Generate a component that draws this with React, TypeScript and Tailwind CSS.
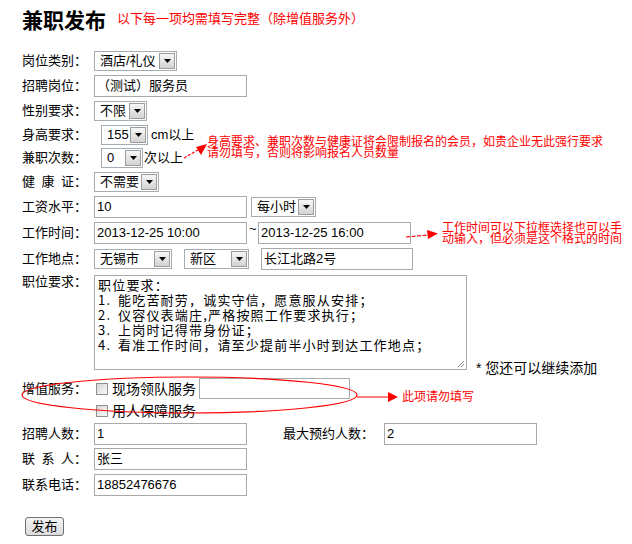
import React from "react";

const Arrow = () => (
  <svg width="7" height="4" viewBox="0 0 7 4">
    <path d="M0 0 L7 0 L3.5 4 Z" fill="#000" />
  </svg>
);

const Sel = ({ w, text }: { w: string; text: string }) => (
  <div className={`flex h-[20px] shrink-0 border border-[#a5acb2] bg-white ${w}`}>
    <span className="flex-1 overflow-hidden whitespace-nowrap pl-[5px] text-[13px] leading-[18px] text-black">{text}</span>
    <span className="my-[1px] mr-[1px] flex w-[16px] items-center justify-center border border-[#9c9c9c] bg-gradient-to-b from-[#f7f7f7] to-[#d2d2d2]">
      <Arrow />
    </span>
  </div>
);

const Inp = ({ w, text, h }: { w: string; text: string; h?: string }) => (
  <div className={`flex shrink-0 items-center border border-[#a9a9a9] bg-white pl-[2px] text-[13px] text-black whitespace-nowrap ${h ?? "h-[22px]"} ${w}`}>
    {text}
  </div>
);

const Label = ({ children }: { children: React.ReactNode }) => (
  <div className="w-[72px] shrink-0 whitespace-nowrap text-[13px] leading-[16px] text-black">{children}</div>
);

const Check = () => (
  <span className="inline-block h-[12px] w-[12px] shrink-0 border border-[#8e8f8f] bg-gradient-to-br from-[#d6d6d6] to-[#fafafa]" />
);

export default function App() {
  return (
    <div className="relative h-[544px] w-[632px] overflow-hidden bg-white pl-[22px] font-['Liberation_Sans','Noto_Sans_CJK_SC',sans-serif] text-black">
      {/* title */}
      <div className="flex h-[38px] items-center">
        <span className="text-[21px] font-bold leading-[24px] font-['Noto_Sans_CJK_SC',sans-serif]">兼职发布</span>
        <span className="ml-[11px] text-[13px] leading-[16px] text-[#ff0000]">以下每一项均需填写完整（除增值服务外）</span>
      </div>

      {/* row 1 */}
      <div className="mt-[11px] flex h-[24px] items-center">
        <Label>岗位类别：</Label>
        <Sel w="w-[83px]" text="酒店/礼仪" />
      </div>
      <div className="flex h-[26px] items-center">
        <Label>招聘岗位：</Label>
        <Inp w="w-[153px]" text="（测试）服务员" />
      </div>
      <div className="flex h-[24px] items-center">
        <Label>性别要求：</Label>
        <Sel w="w-[53px]" text="不限" />
      </div>
      <div className="flex h-[23px] items-center">
        <Label>身高要求：</Label>
        <div className="ml-[7px] flex items-center">
          <Sel w="w-[47px]" text="155" />
          <span className="ml-[3px] text-[13px] leading-[16px]">cm以上</span>
        </div>
      </div>
      <div className="flex h-[23px] items-center">
        <Label>兼职次数：</Label>
        <div className="ml-[7px] flex items-center">
          <Sel w="w-[42px]" text="0" />
          <span className="ml-[1px] text-[13px] leading-[16px]">次以上</span>
        </div>
      </div>
      <div className="flex h-[25px] items-center">
        <Label>健{"\u2002"}康{"\u2002"}证：</Label>
        <Sel w="w-[65px]" text="不需要" />
      </div>
      <div className="flex h-[26px] items-center">
        <Label>工资水平：</Label>
        <Inp w="w-[153px]" text="10" />
        <div className="ml-[4px]">
          <Sel w="w-[65px]" text="每小时" />
        </div>
      </div>
      <div className="flex h-[26px] items-center">
        <Label>工作时间：</Label>
        <Inp w="w-[153px]" text="2013-12-25 10:00" />
        <span className="mb-[8px] w-[11px] pl-[2px] text-[13px] leading-[10px]">~</span>
        <Inp w="w-[153px]" text="2013-12-25 16:00" />
      </div>
      <div className="flex h-[26px] items-center">
        <Label>工作地点：</Label>
        <Sel w="w-[78px]" text="无锡市" />
        <div className="ml-[12px]">
          <Sel w="w-[65px]" text="新区" />
        </div>
        <div className="ml-[12px]">
          <Inp w="w-[152px]" text="长江北路2号" />
        </div>
      </div>

      {/* textarea row */}
      <div className="mt-[3px] flex">
        <div className="w-[72px] shrink-0 text-[13px] leading-[14px]">职位要求：</div>
        <div className="relative h-[95px] w-[373px] shrink-0 border border-[#a9a9a9] bg-white pl-[3px] pt-[1px] text-[13px] leading-[15px] tracking-[1.2px] font-['Noto_Sans_CJK_SC',sans-serif]">
          <div>职位要求：</div>
          <div><span className="inline-block w-[20px]">1.</span>能吃苦耐劳，诚实守信，愿意服从安排；</div>
          <div><span className="inline-block w-[20px]">2.</span>仪容仪表端庄,严格按照工作要求执行；</div>
          <div><span className="inline-block w-[20px]">3.</span>上岗时记得带身份证；</div>
          <div><span className="inline-block w-[20px]">4.</span>看准工作时间，请至少提前半小时到达工作地点；</div>
          <svg className="absolute bottom-[1px] right-[1px]" width="9" height="9" viewBox="0 0 9 9">
            <path d="M8 2 L2 8 M8 5 L5 8" stroke="#8a8a8a" strokeWidth="1" />
          </svg>
        </div>
        <span className="mb-[-6px] ml-[9px] self-end whitespace-nowrap text-[14px] leading-[16px]">* 您还可以继续添加</span>
      </div>

      {/* value-added */}
      <div className="mt-[6px] flex h-[25px] items-center">
        <Label>增值服务：</Label>
        <div className="ml-[2px] flex items-center">
          <Check />
          <span className="ml-[4px] text-[14px] leading-[16px]">现场领队服务</span>
        </div>
        <div className="ml-[3px]">
          <Inp w="w-[151px]" text="" h="h-[21px]" />
        </div>
      </div>
      <div className="flex h-[20px] items-center pl-[74px]">
        <Check />
        <span className="ml-[4px] text-[14px] leading-[16px]">用人保障服务</span>
      </div>

      <div className="flex h-[25px] items-center">
        <Label>招聘人数：</Label>
        <Inp w="w-[153px]" text="1" />
        <span className="ml-[36px] w-[101px] shrink-0 whitespace-nowrap text-[13px] leading-[16px]">最大预约人数：</span>
        <Inp w="w-[153px]" text="2" />
      </div>
      <div className="flex h-[26px] items-center">
        <Label>联{"\u2002"}系{"\u2002"}人：</Label>
        <Inp w="w-[153px]" text="张三" />
      </div>
      <div className="flex h-[26px] items-center">
        <Label>联系电话：</Label>
        <Inp w="w-[153px]" text="18852476676" />
      </div>

      <div className="ml-[3px] mt-[19px] flex h-[19px] w-[39px] items-center justify-center rounded-[3px] border border-[#707070] bg-gradient-to-b from-[#f4f4f4] to-[#dcdcdc] text-[13px] leading-[16px]">
        发布
      </div>

      {/* annotations overlay */}
      <svg className="pointer-events-none absolute left-0 top-0" width="632" height="544" viewBox="0 0 632 544">
        <ellipse cx="189.5" cy="395" rx="167.5" ry="18" fill="none" stroke="#ff0000" strokeWidth="1.2" />
        <path d="M357 397 L390 397" stroke="#ff0000" strokeWidth="1.2" />
        <path d="M388 392 L398 397 L388 402 Z" fill="#ff0000" />
        <path d="M184 158 L198 150" stroke="#ff0000" strokeWidth="1.2" strokeDasharray="3 1.5" />
        <path d="M196 147 L207 144 L201 155 Z" fill="#ff0000" />
        <path d="M406 237 L428 235" stroke="#ff0000" strokeWidth="1.2" strokeDasharray="4 1.5" />
        <path d="M427 230 L438 233.5 L428 239 Z" fill="#ff0000" />
      </svg>
      <div className="pointer-events-none absolute left-[207px] top-[135px] whitespace-nowrap text-[12px] leading-[11px] text-[#ff0000] font-['Noto_Sans_CJK_SC',sans-serif]">
        身高要求、兼职次数与健康证将会限制报名的会员，如贵企业无此强行要求
        <br />
        请勿填写，否则将影响报名人员数量
      </div>
      <div className="pointer-events-none absolute left-[442px] top-[221px] whitespace-nowrap text-[12px] leading-[11px] text-[#ff0000] font-['Noto_Sans_CJK_SC',sans-serif]">
        工作时间可以下拉框选择也可以手
        <br />
        动输入，但必须是这个格式的时间
      </div>
      <div className="pointer-events-none absolute left-[402px] top-[389px] whitespace-nowrap text-[12px] leading-[14px] text-[#ff0000] font-['Noto_Sans_CJK_SC',sans-serif]">
        此项请勿填写
      </div>
    </div>
  );
}
